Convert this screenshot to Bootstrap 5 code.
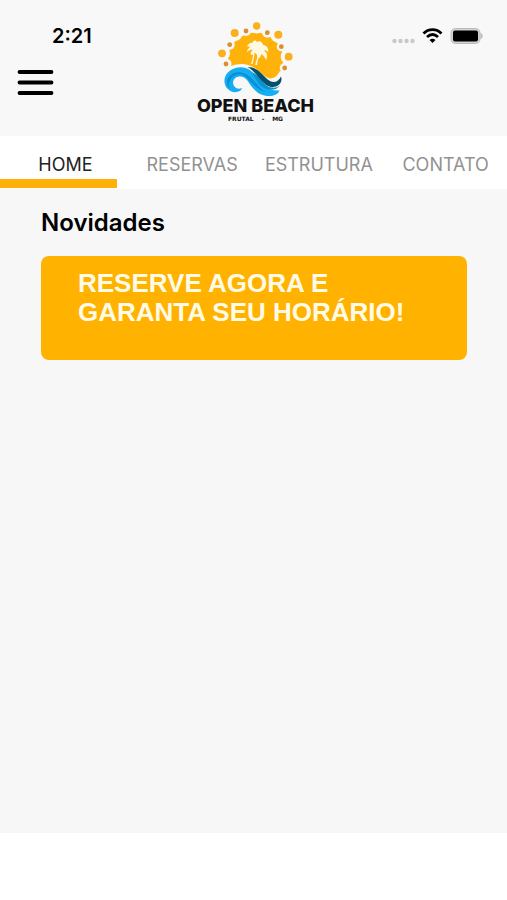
<!DOCTYPE html>
<html lang="pt-BR">
<head>
<meta charset="utf-8">
<meta name="viewport" content="width=device-width, initial-scale=1">
<title>Open Beach</title>
<link href="https://cdn.jsdelivr.net/npm/bootstrap@5.3.0/dist/css/bootstrap.min.css" rel="stylesheet">
<style>
  body { font-family: Inter, "Liberation Sans", sans-serif; color: #000; }
  .screen { background: #f7f7f7; }
  .top-bar { padding: 20px 24px 14px 16px; background: #f8f8f8; }
  .clock { font-size: 20px; line-height: 32px; font-weight: 600; padding-left: 36px; }
  .menu-btn { width: 40px; height: 40px; margin-top: 10px; }
  .status-icons { height: 32px; }
  .brand { color: #111; padding-left: 12px; }
  .brand-name { font-size: 18px; line-height: 19px; font-weight: 800; }
  .brand-place { font-family: "DejaVu Sans", sans-serif; font-size: 6px; line-height: 7px; font-weight: 700; gap: 8px; }
  .tab-link { color: #929292; font-size: 18px; line-height: 20px; padding: 19px 0 0 4px; text-decoration: none; }
  .tab-link.active { color: #222; }
  .tab-mark { height: 9px; margin: 4px 10px 1px 0; }
  .tab-item.current .tab-mark { background: #ffb006; }
  .news { padding: 18px 40px 0 41px; }
  .news-title { font-size: 24px; line-height: 32px; font-weight: 600; margin-bottom: 17px; }
  .promo { background: #ffb200; border-radius: 8px; padding: 13px 32px 33px 37px; color: #fffbe6; text-decoration: none;
    font: 700 26px/29px "Liberation Sans", Arial, sans-serif; }
  .bottom-area { height: 67px; }
</style>
<script defer src="https://cdn.jsdelivr.net/npm/bootstrap@5.3.0/dist/js/bootstrap.bundle.min.js"></script>
</head>
<body class="bg-white">
<div class="d-flex flex-column min-vh-100">
  <div class="screen flex-grow-1">
    <header class="top-bar d-flex">
      <div class="col d-flex flex-column align-items-start">
        <div class="clock">2:21</div>
        <button type="button" class="menu-btn btn p-0 border-0" aria-label="Menu">
          <svg class="d-block" width="40" height="40" viewBox="0 0 40 40" stroke="#000" stroke-width="3.800" stroke-linecap="round"><path d="M3.500 10H35.500M3.500 20.500H35.500M3.500 31H35.500"/></svg>
        </button>
      </div>
      <a href="#" class="brand d-flex flex-column align-items-center text-decoration-none">
        <svg width="80" height="76" viewBox="215 20 80 76" aria-hidden="true">
          <circle cx="254.500" cy="60.500" r="28" fill="#ffb20a"/>
          <g fill="#f8f8f8">
            <circle cx="255.700" cy="26" r="7.500"/><circle cx="233.700" cy="33" r="8"/><circle cx="277.300" cy="34.700" r="8"/><circle cx="221" cy="53.300" r="8"/><circle cx="287.700" cy="56.700" r="8"/>
            <circle cx="245" cy="31" r="5"/><circle cx="266.300" cy="32.700" r="5"/><circle cx="228.700" cy="44.700" r="5"/><circle cx="280.300" cy="46.700" r="4.500"/><circle cx="225" cy="64" r="5.500"/><circle cx="283.700" cy="68" r="5"/>
            <path d="M222 71C228 66 236 63 245 64.500C255 66 260 75 266 77.500C271 80 276 77 279 71L286 74V96H218Z"/>
          </g>
          <g fill="#f9b01c"><circle cx="255.700" cy="26" r="3.700"/><circle cx="233.700" cy="33" r="4"/><circle cx="277.300" cy="34.700" r="4"/><circle cx="221" cy="53.300" r="3.900"/><circle cx="287.700" cy="56.700" r="3.900"/></g>
          <g fill="#d98f32"><circle cx="245" cy="31" r="2.400"/><circle cx="266.300" cy="32.700" r="2.400"/><circle cx="228.700" cy="44.700" r="2.400"/><circle cx="280.300" cy="46.700" r="2.400"/><circle cx="225" cy="64" r="2.400"/><circle cx="283.700" cy="68" r="2.400"/></g>
          <g fill="#fff8e3">
            <path d="M246 46C248 44 249 42 252 43C251 41 254 39 256 42C259 40 262 43 262 45C265 45 268 48 267 52C265 50 264 50 263 51C266 52 267 56 265 60C264 57 262 55 260 54C260 57 258 59 256 58C257 56 256 54 254 53C253 53 252 55 250 55C249 52 251 51 252 50C249 49 248 51 246 52C246 50 247 49 249 47Z"/>
            <path d="M252 51H253.500C253.500 56 252.500 60 251.500 64H250C251.500 59 252.500 56 252 51ZM257 53H258.500C258 57 256.500 60 256 65H254.300C255 60 257 57 257 53Z"/>
          </g>
          <path d="M241 88C240 92 233 94 228 90C221 85 222 74 231 69.500C240 65 249 68 254 75C260 83 264 91 278.500 90.500C277 96 267 98 259 94C252 90 249 84 246 80C241 74 233 76 232 82C232 87 236 90 241 88Z" fill="#16aef0"/>
          <path d="M229 89C223 83 226 76 233 73C240 71 246 74 251 79C257 85 260 90 265 92C256 90 251 83 246 78C239 71 231 75 229 81C228 84 228 87 229 89Z" fill="#0890d6"/>
          <path d="M251 72.500C260 75 262 87 271 87.500C275 88 277 87 279 85.500C275 91 266 91 260 86C255 81 254 77 251 72.500Z" fill="#0793cf"/>
          <path d="M246.500 67C255 67 260 73 265 78C271 84 277 83 280 76.500C283 85 272 91 264 84C257 78 254 71 246.500 67Z" fill="#07506c"/>
        </svg>
        <span class="brand-name text-nowrap">OPEN BEACH</span>
        <span class="brand-place d-flex"><span>FRUTAL</span><span>-</span><span>MG</span></span>
      </a>
      <div class="col d-flex justify-content-end">
        <div class="status-icons d-flex align-items-center">
          <svg width="92" height="22" viewBox="0 0 92 22" role="img" aria-label="Sinal, Wi-Fi e bateria">
            <g fill="#c9c9c9"><circle cx="3.500" cy="16" r="2.200"/><circle cx="9.500" cy="16" r="2.200"/><circle cx="15.500" cy="16" r="2.200"/><circle cx="21.500" cy="16" r="2.200"/></g>
            <g fill="none" stroke="#000" stroke-width="2.800"><path d="M32.500 8.500C37.500 3.300 45.500 3.300 50.500 8.500"/><path d="M36 12C39.500 8.800 43.500 8.800 47 12"/></g>
            <path d="M38.500 15Q41.500 12.500 44.500 15L41.500 18Z"/>
            <rect x="60" y="3.500" width="29" height="15" rx="4.500" fill="#d2d2d2" stroke="#bcbcbc"/>
            <rect x="62" y="5.500" width="25" height="11" rx="2"/>
            <path d="M89.500 7.500Q94 11 89.500 14.500Z" fill="#bcbcbc"/>
          </svg>
        </div>
      </div>
    </header>
    <nav class="bg-white" aria-label="Principal">
      <ul class="list-unstyled d-flex mb-0">
        <li class="tab-item current col-3"><a href="#" class="tab-link active d-block text-center" aria-current="page">HOME</a><div class="tab-mark"></div></li>
        <li class="tab-item col-3"><a href="#" class="tab-link d-block text-center">RESERVAS</a><div class="tab-mark"></div></li>
        <li class="tab-item col-3"><a href="#" class="tab-link d-block text-center">ESTRUTURA</a><div class="tab-mark"></div></li>
        <li class="tab-item col-3"><a href="#" class="tab-link d-block text-center">CONTATO</a><div class="tab-mark"></div></li>
      </ul>
    </nav>
    <main class="news">
      <h1 class="news-title">Novidades</h1>
      <a href="#" class="promo d-block">RESERVE AGORA E<br>GARANTA SEU HORÁRIO!</a>
    </main>
  </div>
  <div class="bottom-area bg-white"></div>
</div>
</body>
</html>
